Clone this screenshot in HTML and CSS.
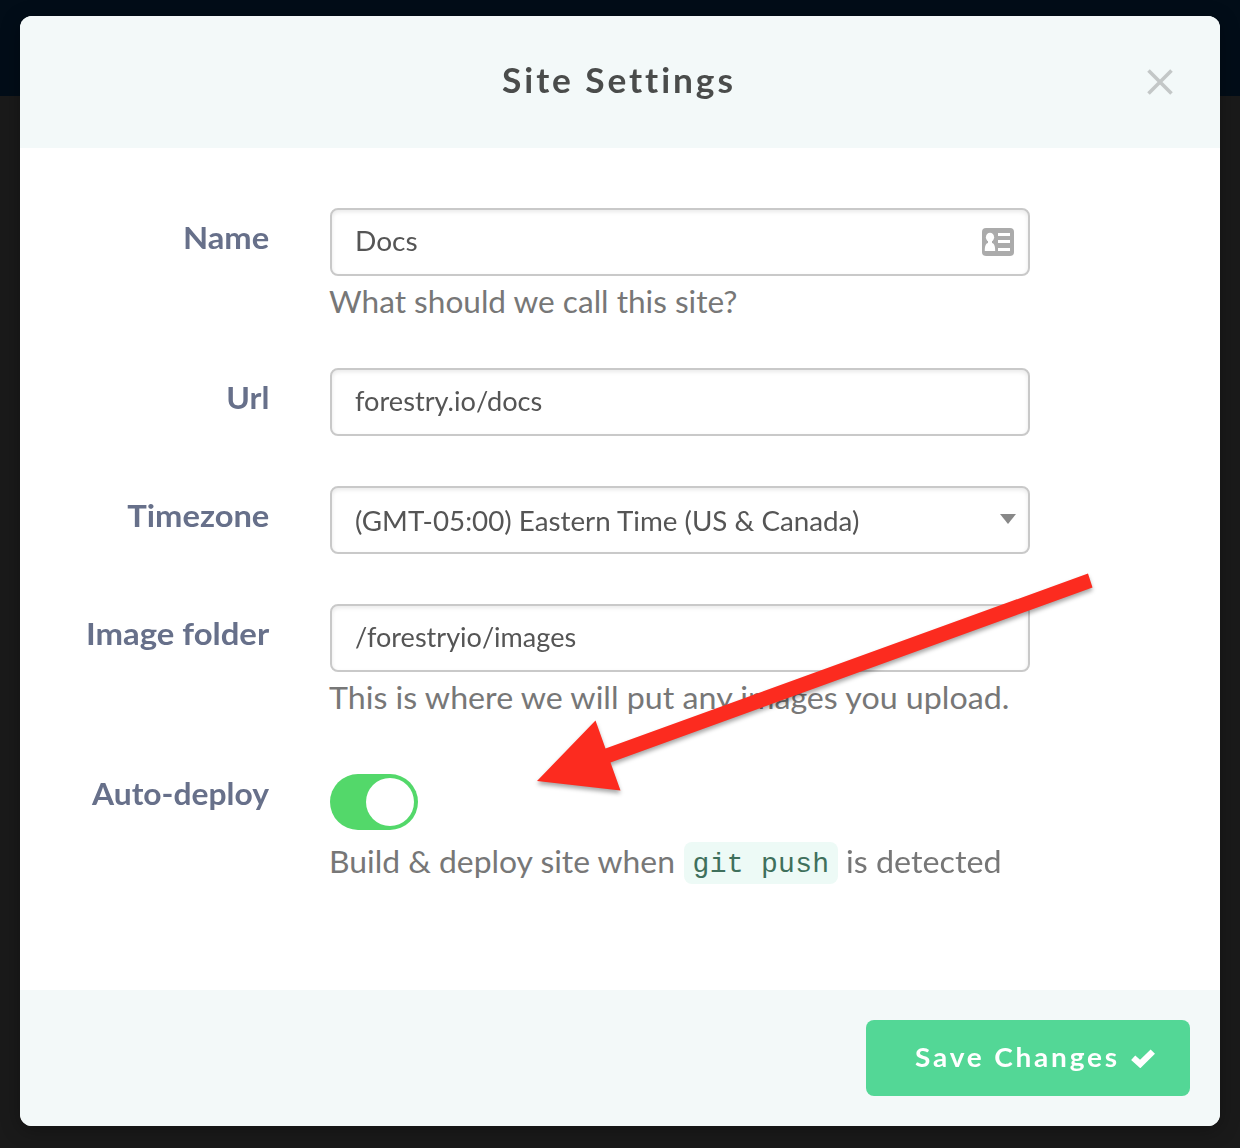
FILE: index.html
```html
<!DOCTYPE html>
<html lang="en">
<head>
<meta charset="utf-8">
<title>Site Settings</title>
<link rel="stylesheet" href="styles.css">
</head>
<body>
<main class="modal">
  <header class="modal-header">
    <h1 class="title">Site Settings</h1>
    <button class="close" aria-label="Close">
      <svg width="26" height="26" viewBox="0 0 26 26"><path d="M1.5 1.5 24.5 24.5M24.5 1.5 1.5 24.5" fill="none" stroke="#c3c7c7" stroke-width="3.6"/></svg>
    </button>
  </header>
  <form class="modal-body">
    <div class="row">
      <span class="label"><span class="t-name">Name</span></span>
      <div class="field">
        <div class="control"><span class="t-docs">Docs</span>
          <svg class="card-icon" width="32" height="28" viewBox="0 0 32 28">
            <rect width="32" height="28" rx="4" fill="#ababab"/>
            <g fill="#fff"><ellipse cx="8" cy="9.3" rx="4.1" ry="4.6"/><path d="M6 12h4v3c2.300.7 3.200 3 3.200 8H2.800c0-5 .9-7.300 3.200-8z"/><path d="M16 5h12v3H16zM16 12h12v3H16zM16 20h12v3H16z"/></g>
          </svg>
        </div>
        <p class="help"><span class="t-what">What should we call this site?</span></p>
      </div>
    </div>
    <div class="row">
      <span class="label"><span class="t-url">Url</span></span>
      <div class="field"><div class="control"><span class="t-forestry">forestry.io/docs</span></div></div>
    </div>
    <div class="row">
      <span class="label"><span class="t-timezone">Timezone</span></span>
      <div class="field"><div class="control select"><span class="t-gmt">(GMT-05:00) Eastern Time (US &amp; Canada)</span>
        <svg class="caret" width="16" height="10" viewBox="0 0 16 10"><path d="M0 0h16L8 10z" fill="#888"/></svg>
      </div></div>
    </div>
    <div class="row">
      <span class="label"><span class="t-folder">Image folder</span></span>
      <div class="field">
        <div class="control"><span class="t-images">/forestryio/images</span></div>
        <p class="help"><span class="t-upload">This is where we will put any images you upload.</span></p>
      </div>
    </div>
    <div class="row">
      <span class="label"><span class="t-auto">Auto-deploy</span></span>
      <div class="field">
        <div class="toggle"><span class="knob"></span></div>
        <p class="help deploy"><span class="build-cell"><span class="t-build">Build &amp; deploy site when</span></span><code class="code">git push</code><span class="t-detected">is detected</span></p>
      </div>
    </div>
  </form>
  <footer class="modal-footer">
    <button class="save"><span class="t-save">Save Changes</span>
      <svg width="26" height="20" viewBox="0 0 26 20"><path d="M3.200 9.700 10.200 16 22.800 3.600" fill="none" stroke="#fff" stroke-width="6.200"/></svg>
    </button>
  </footer>
</main>
<svg class="arrow" width="580" height="250" viewBox="530 560 580 250">
  <path d="M537 781 595.500 720.500 605.500 748.500 1088 573.500 1092.500 587.500 610.500 762.500 620.500 790.500z" fill="#fc2b1f"/>
</svg>
</body>
</html>
```
FILE: styles.css
```css
* { box-sizing: border-box; }
body {
  margin: 0;
  height: 1148px;
  padding: 16px 20px 22px;
  overflow: hidden;
  background: linear-gradient(#020d18 96px, #1a1a1a 96px);
  font-family: Lato, "Liberation Sans", sans-serif;
}
h1, p { margin: 0; }
button { border: 0; padding: 0; background: none; font-family: inherit; }
.modal {
  height: 1110px;
  display: flex;
  flex-direction: column;
  background: #fff;
  border-radius: 12px;
  overflow: hidden;
  box-shadow: 0 4px 20px rgba(0, 0, 0, .3);
}
.modal-header {
  height: 132px;
  padding: 0 47px 1px 73px;
  display: flex;
  align-items: center;
  background: #f3f9f9;
}
.title {
  flex: 1;
  padding: 0 2px 3px 0;
  text-align: center;
  font-size: 34px;
  line-height: 40px;
  letter-spacing: 2.8px;
  transform: scaleX(1.038);
  color: #4a4c4b;
}
.close { width: 26px; height: 26px; }
.close svg { display: block; }
.modal-body { flex: 1; padding-top: 60px; }
.row {
  display: grid;
  grid-template-columns: 249px 700px;
  column-gap: 61px;
  padding-bottom: 50px;
}
.label {
  padding-top: 9px;
  text-align: right;
  font-size: 30px;
  line-height: 40px;
  font-weight: 700;
  color: #67708a;
  white-space: nowrap;
}
.control {
  height: 68px;
  padding: 0 14px 3px 23px;
  display: flex;
  align-items: center;
  justify-content: space-between;
  border: 2px solid #c9c9c9;
  border-radius: 8px;
  box-shadow: inset 0 2px 4px rgba(0, 0, 0, .09);
  font-size: 26px;
  color: #555;
  white-space: nowrap;
}
.select { padding: 1px 12px 0 23px; }
.card-icon { margin-top: 3px; }
.caret { margin-top: -4px; }
.help {
  height: 42px;
  padding-top: 5px;
  font-size: 30px;
  line-height: 40px;
  color: #777;
  white-space: nowrap;
}

/* Lato is narrower than the wide geometric look of this form */
.label > span, .control > span, .help > span, .t-build, .t-save { display: inline-block; transform-origin: left; }
.label > span { transform-origin: right; }
.t-name, .t-timezone { transform: scaleX(1.09); }
.t-url { transform: scaleX(1.065); }
.t-folder { transform: scaleX(1.096); }
.t-auto { transform: scaleX(1.06); }
.t-docs { transform: scaleX(1.08); }
.t-forestry { transform: scaleX(1.045); }
.t-gmt { transform: scaleX(1.068); }
.t-images { transform: scaleX(1.04); }
.t-what { transform: translateX(-1px) scaleX(1.053); }
.t-upload { transform: translateX(-1px) scaleX(1.073); }
.t-build { transform: translateX(-1px) scaleX(1.062); }
.t-detected { transform: scaleX(1.076); }
.t-save { transform: scaleX(1.077); }

.toggle {
  width: 88px;
  height: 56px;
  margin-top: 10px;
  padding: 4px;
  display: flex;
  justify-content: flex-end;
  border-radius: 28px;
  background: #53d86a;
}
.knob { width: 48px; height: 48px; border-radius: 50%; background: #fff; }
.deploy { display: flex; padding-top: 11px; height: 54px; }
.build-cell { width: 354px; }
.code {
  width: 154px;
  height: 42px;
  margin: 1px 8px 0 0;
  padding-top: 2px;
  border-radius: 8px;
  background: #edfaf6;
  color: #3f705c;
  font: 28px/42px "Liberation Mono", monospace;
  letter-spacing: .3px;
  text-align: center;
}
.modal-footer {
  height: 136px;
  padding: 30px;
  display: flex;
  justify-content: flex-end;
  background: #f3f9f9;
}
.save {
  width: 324px;
  height: 76px;
  padding: 0 34px 3px 49px;
  display: flex;
  align-items: center;
  justify-content: space-between;
  border-radius: 8px;
  background: #53d796;
  color: #fff;
  font-size: 26px;
  font-weight: 700;
  letter-spacing: 2.6px;
  white-space: nowrap;
}
.save svg { margin-top: 3px; }
/* Annotation lying over the form */
.arrow {
  position: absolute;
  left: 530px;
  top: 560px;
  filter: drop-shadow(0 3px 2px rgba(0, 0, 0, .35));
}
```
